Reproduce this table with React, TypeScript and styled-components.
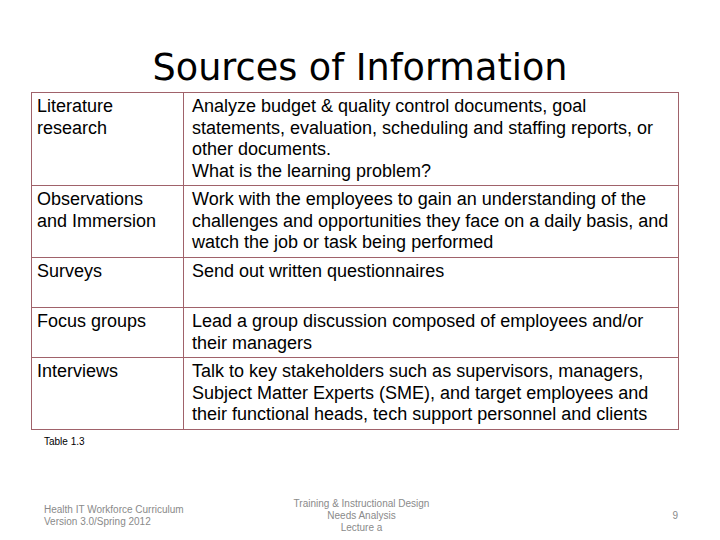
import React from "react";
import styled, { createGlobalStyle } from "styled-components";

const GlobalStyle = createGlobalStyle`
  html, body {
    margin: 0;
    padding: 0;
    background: #ffffff;
  }
`;

const Slide = styled.div`
  width: 720px;
  height: 540px;
  display: flex;
  flex-direction: column;
  background: #ffffff;
  font-family: "Liberation Sans", Arial, sans-serif;
  color: #000;
  overflow: hidden;
`;

const Title = styled.h1`
  margin: 0;
  padding-top: 47px;
  height: 45px;
  text-align: center;
  font-family: "DejaVu Sans", Verdana, sans-serif;
  font-weight: normal;
  font-size: 36.6px;
  line-height: 42px;
`;

const Table = styled.div`
  margin-left: 31px;
  width: 647px;
  display: grid;
  grid-template-columns: 152px 1fr;
  border-top: 1px solid #a0626a;
  border-left: 1px solid #a0626a;
`;

const Cell = styled.div<{ $wide?: boolean; $min: number }>`
  border-right: 1px solid #a0626a;
  border-bottom: 1px solid #a0626a;
  padding: ${({ $wide }) => ($wide ? "3px 4px 2px 8px" : "3px 4px 2px 5px")};
  min-height: ${({ $min }) => `${$min}px`};
  font-size: 18px;
  line-height: 21.7px;
  box-sizing: border-box;
`;

const Line = styled.div`
  white-space: nowrap;
`;

const Caption = styled.div`
  margin: 6px 0 0 44px;
  font-size: 10px;
  line-height: 12px;
`;

const Footer = styled.div`
  margin-top: auto;
  height: 48px;
  display: grid;
  grid-template-columns: 230px 220px 1fr;
  align-items: center;
  font-size: 10px;
  line-height: 12px;
  color: #8a8a8a;
`;

const FooterLeft = styled.div`
  padding-left: 44px;
`;

const FooterCenter = styled.div`
  text-align: center;
  margin-left: 43px;
`;

const PageNum = styled.div`
  text-align: right;
  padding-right: 42px;
`;

const rows: { term: string[]; text: string[]; min: number }[] = [
  {
    term: ["Literature", "research"],
    text: [
      "Analyze budget & quality control documents, goal",
      "statements, evaluation, scheduling and staffing reports, or",
      "other documents.",
      "What is the learning problem?",
    ],
    min: 92,
  },
  {
    term: ["Observations", "and Immersion"],
    text: [
      "Work with the employees to gain an understanding of the",
      "challenges and opportunities they face on a daily basis, and",
      "watch the job or task being performed",
    ],
    min: 72,
  },
  { term: ["Surveys"], text: ["Send out written questionnaires"], min: 50 },
  {
    term: ["Focus groups"],
    text: ["Lead a group discussion composed of employees and/or", "their managers"],
    min: 50,
  },
  {
    term: ["Interviews"],
    text: [
      "Talk to key stakeholders such as supervisors, managers,",
      "Subject Matter Experts (SME), and target employees and",
      "their functional heads, tech support personnel and clients",
    ],
    min: 72,
  },
];

export default function App() {
  return (
    <Slide>
      <GlobalStyle />
      <Title>Sources of Information</Title>
      <Table>
        {rows.map((r) => (
          <React.Fragment key={r.term.join(" ")}>
            <Cell $min={r.min}>
              {r.term.map((t) => (
                <Line key={t}>{t}</Line>
              ))}
            </Cell>
            <Cell $wide $min={r.min}>
              {r.text.map((t) => (
                <Line key={t}>{t}</Line>
              ))}
            </Cell>
          </React.Fragment>
        ))}
      </Table>
      <Caption>Table 1.3</Caption>
      <Footer>
        <FooterLeft>
          Health IT Workforce Curriculum
          <br />
          Version 3.0/Spring 2012
        </FooterLeft>
        <FooterCenter>
          Training &amp; Instructional Design
          <br />
          Needs Analysis
          <br />
          Lecture a
        </FooterCenter>
        <PageNum>9</PageNum>
      </Footer>
    </Slide>
  );
}
